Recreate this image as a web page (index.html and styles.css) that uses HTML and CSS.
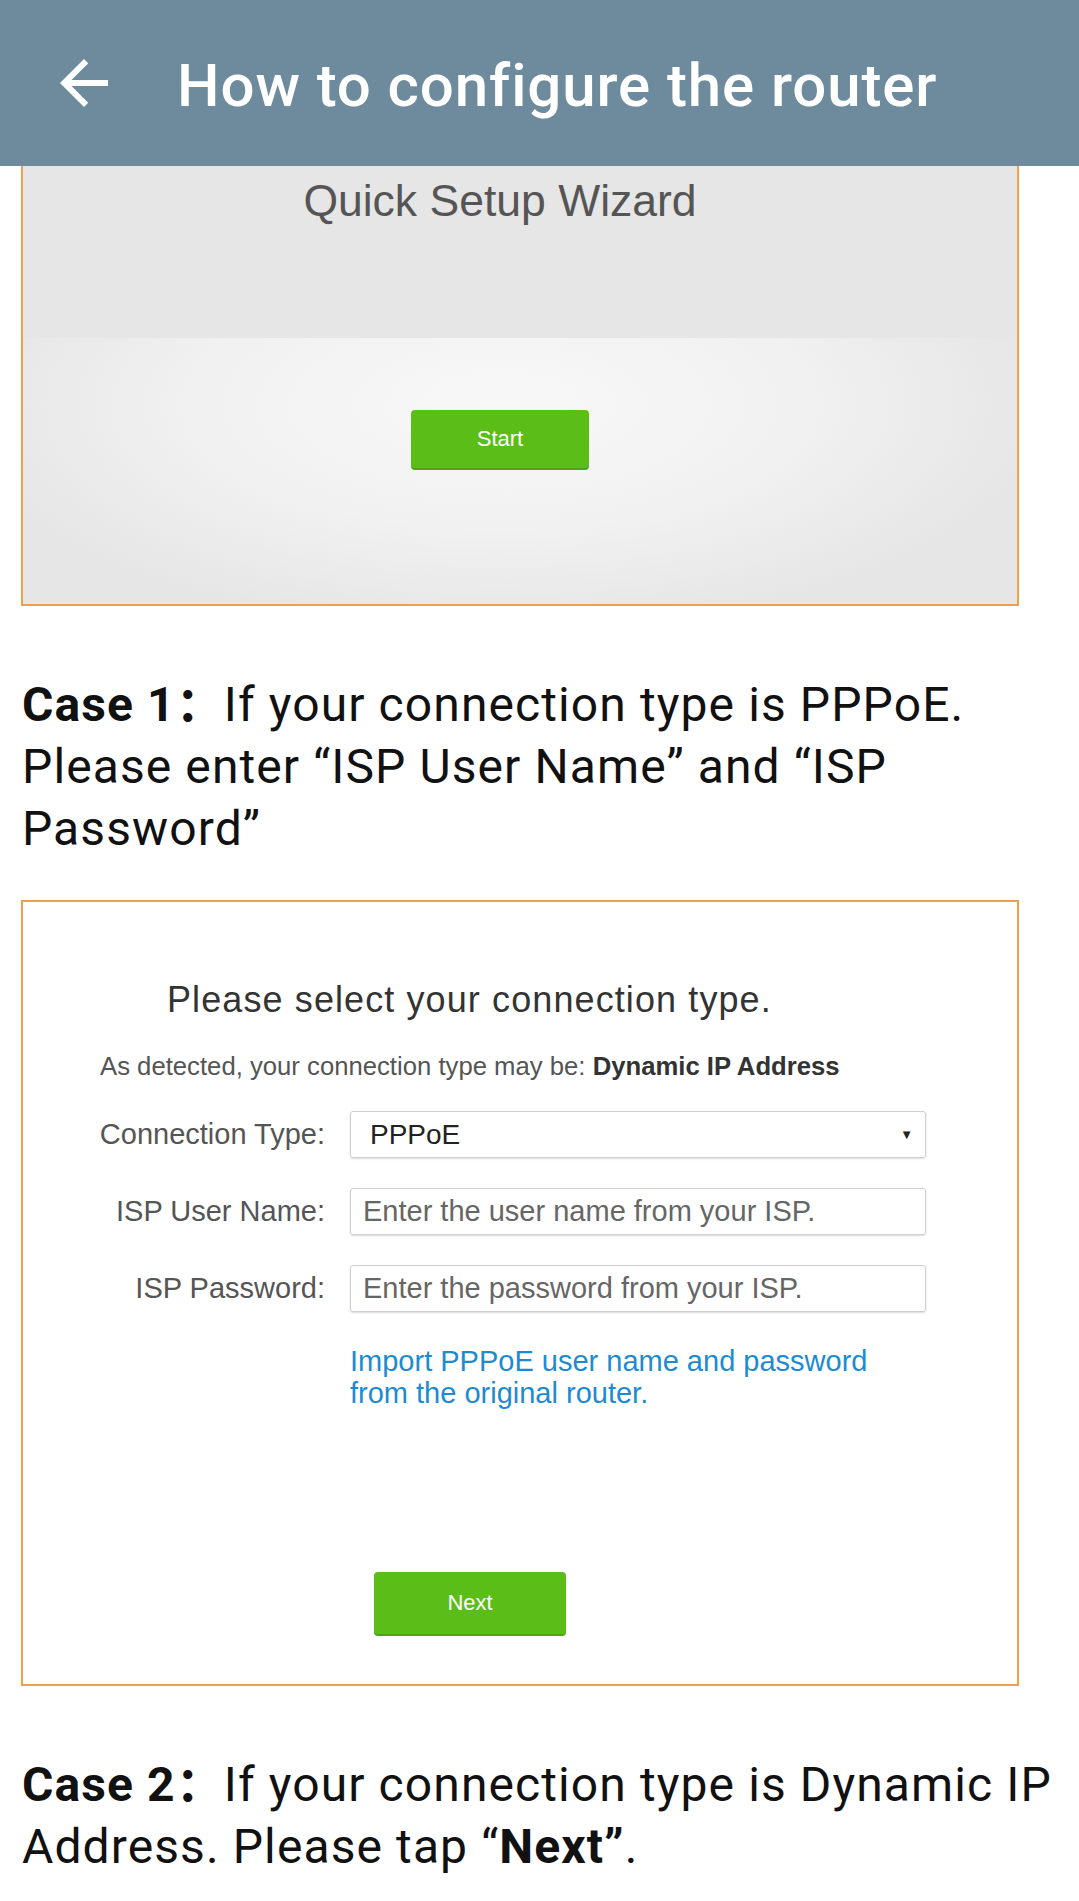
FILE: index.html
```html
<!DOCTYPE html>
<html lang="en">
<head>
<meta charset="utf-8">
<title>How to configure the router</title>
<link rel="stylesheet" href="styles.css">
</head>
<body>
<header class="appbar">
  <svg class="back" viewBox="0 0 24 24" aria-hidden="true"><path d="M20 11H7.83l5.59-5.59L12 4l-8 8 8 8 1.41-1.41L7.83 13H20v-2z"/></svg>
  <h1 class="title">How to configure the router</h1>
</header>
<main class="content">
  <div class="shot shot-wizard">
    <div class="wiz-top"><div class="wiz-title">Quick Setup Wizard</div></div>
    <div class="wiz-bottom"><div class="btn btn-start">Start</div></div>
  </div>

  <p class="para para-1"><b>Case 1<span class="fw">：</span></b>If your connection type is PPPoE. Please enter “ISP User Name” and “ISP Password”</p>

  <div class="shot shot-form">
    <div class="form-title">Please select your connection type.</div>
    <div class="form-sub">As detected, your connection type may be: <b>Dynamic IP Address</b></div>
    <div class="form-grid">
      <div class="label">Connection Type:</div>
      <div class="field select">PPPoE<span class="caret">▼</span></div>
      <div class="label">ISP User Name:</div>
      <div class="field placeholder">Enter the user name from your ISP.</div>
      <div class="label">ISP Password:</div>
      <div class="field placeholder">Enter the password from your ISP.</div>
    </div>
    <div class="form-link">Import PPPoE user name and password<br>from the original router.</div>
    <div class="btn btn-next">Next</div>
  </div>

  <p class="para para-2"><b>Case 2<span class="fw">：</span></b>If your connection type is Dynamic IP Address. Please tap “<b>Next”</b>.</p>
</main>
</body>
</html>
```

FILE: styles.css
```css
* { box-sizing: border-box; }
html, body { margin: 0; padding: 0; background: #fff; }
body { font-family: Roboto, "Noto Sans", sans-serif; color: #111; }

.appbar {
  height: 166px;
  background: #6d8b9c;
  display: flex;
  align-items: center;
}
.back {
  width: 72px;
  height: 72px;
  margin-left: 48px;
  fill: #fff;
  flex: none;
}
.title {
  margin: 6px 0 0 57px;
  font-family: Roboto, sans-serif;
  font-weight: 500;
  font-size: 60px;
  line-height: 72px;
  letter-spacing: 0.9px;
  color: #fff;
  white-space: nowrap;
}

.content { padding: 0; }

.shot {
  margin: 0 60px 0 21px;
  border: 2px solid #f0a04b;
  font-family: "Liberation Sans", Arial, sans-serif;
}

/* Quick setup wizard picture */
.shot-wizard { border-top: none; height: 440px; display: flex; flex-direction: column; }
.wiz-top {
  height: 172px;
  background: #e6e6e6;
  padding: 10px 40px 0 0;
  text-align: center;
}
.wiz-title {
  font-size: 44.5px;
  line-height: 50px;
  color: #555;
}
.wiz-bottom {
  flex: 1;
  background: radial-gradient(ellipse 55% 85% at 48% 25%, #f8f8f8 0%, #f1f1f1 55%, #e6e6e6 100%);
  display: flex;
  justify-content: center;
  align-items: flex-start;
  padding: 72px 40px 0 0;
}

.btn {
  background: #5bbd17;
  color: #fff;
  border-radius: 4px;
  border-bottom: 2px solid #4ea512;
  display: flex;
  align-items: center;
  justify-content: center;
  font-family: "Liberation Sans", Arial, sans-serif;
}
.btn-start { width: 178px; height: 60px; font-size: 22px; }

/* paragraphs */
.para {
  margin: 0;
  padding: 0 8px 0 22px;
  font-size: 48px;
  line-height: 62px;
  letter-spacing: 1.1px;
  color: #111;
}
.para b { font-weight: 700; }
.fw { font-family: "Noto Sans CJK SC", sans-serif; font-weight: 700; letter-spacing: 0; }
.para-1 { margin-top: 63px; margin-bottom: 40px; }
.para-2 { margin-top: 63px; }

/* connection form picture */
.shot-form { background: #fff; padding-bottom: 48px; }
.form-title {
  margin-top: 78px;
  padding-left: 144px;
  font-size: 36px;
  line-height: 40px;
  letter-spacing: 1.1px;
  color: #333;
}
.form-sub {
  margin-top: 31px;
  padding-left: 77px;
  font-size: 25.7px;
  line-height: 30px;
  color: #555;
}
.form-sub b { color: #333; }
.form-grid {
  margin-top: 30px;
  display: grid;
  grid-template-columns: 302px 576px;
  column-gap: 25px;
  row-gap: 30px;
}
.label {
  text-align: right;
  font-size: 29px;
  line-height: 47px;
  color: #555;
}
.field {
  height: 47px;
  border: 1px solid #cfcfcf;
  border-radius: 3px;
  box-shadow: 0 1px 2px rgba(0, 0, 0, 0.15);
  padding-left: 19px;
  font-size: 29px;
  line-height: 45px;
  color: #222;
  position: relative;
}
.select { font-size: 28px; }
.placeholder { color: #666; padding-left: 12px; }
.caret {
  position: absolute;
  right: 12px;
  top: 0;
  font-size: 13px;
  color: #222;
}
.form-link {
  margin: 33px 0 0 327px;
  font-size: 29px;
  line-height: 32px;
  color: #1d8bd1;
}
.btn-next {
  margin: 163px 0 0 351px;
  width: 192px;
  height: 64px;
  font-size: 22px;
}
```
